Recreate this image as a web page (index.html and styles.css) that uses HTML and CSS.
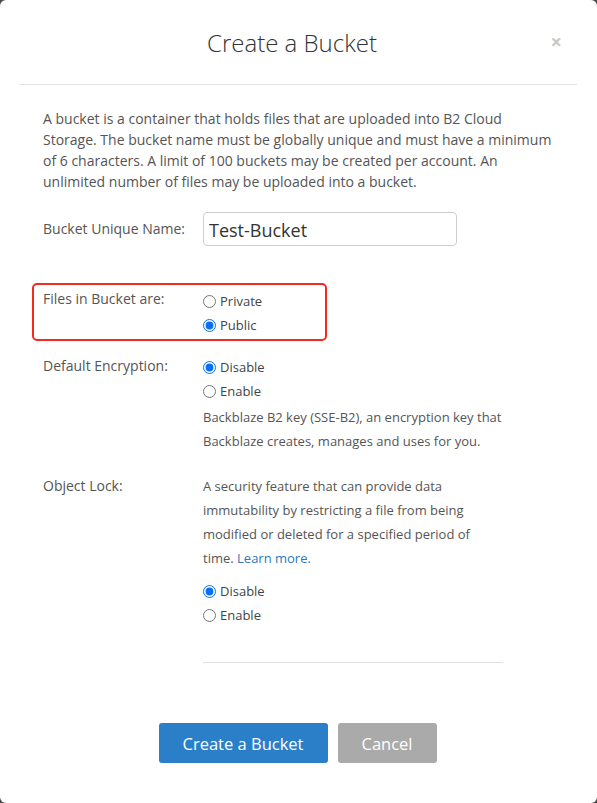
FILE: index.html
```html
<!DOCTYPE html>
<html lang="en">
<head>
<meta charset="utf-8">
<title>Create a Bucket</title>
<link rel="stylesheet" href="styles.css">
</head>
<body>
<div class="modal">
  <div class="modal-header">
    <h2 class="modal-title">Create a Bucket</h2>
    <button class="close" type="button" aria-label="Close">&times;</button>
  </div>
  <div class="modal-body">
    <p class="intro">A bucket is a container that holds files that are uploaded into B2 Cloud Storage. The bucket name must be globally unique and must have a minimum of 6 characters. A limit of 100 buckets may be created per account. An unlimited number of files may be uploaded into a bucket.</p>

    <div class="row row-name">
      <label class="label label-name" for="bucketName">Bucket Unique Name:</label>
      <input class="text-input" id="bucketName" type="text" value="Test-Bucket">
    </div>

    <div class="row row-files highlight">
      <div class="label">Files in Bucket are:</div>
      <div class="options">
        <label class="radio"><input type="radio" name="privacy"> Private</label>
        <label class="radio"><input type="radio" name="privacy" checked> Public</label>
      </div>
    </div>

    <div class="row row-enc">
      <div class="label">Default Encryption:</div>
      <div class="options">
        <label class="radio"><input type="radio" name="enc" checked> Disable</label>
        <label class="radio"><input type="radio" name="enc"> Enable</label>
        <p class="note">Backblaze B2 key (SSE-B2), an encryption key that Backblaze creates, manages and uses for you.</p>
      </div>
    </div>

    <div class="row row-lock">
      <div class="label">Object Lock:</div>
      <div class="options">
        <p class="lock-desc">A security feature that can provide data immutability by restricting a file from being modified or deleted for a specified period of time. <a href="#" class="link">Learn more.</a></p>
        <label class="radio"><input type="radio" name="lock" checked> Disable</label>
        <label class="radio"><input type="radio" name="lock"> Enable</label>
        <div class="divider"></div>
      </div>
    </div>
  </div>
  <div class="modal-footer">
    <button class="btn btn-primary" type="button">Create a Bucket</button>
    <button class="btn btn-cancel" type="button">Cancel</button>
  </div>
</div>
</body>
</html>
```
FILE: styles.css
```css
* { box-sizing: border-box; }
html, body { margin: 0; padding: 0; }
body {
  background: #4a4a4a;
  font-family: "Open Sans", "Liberation Sans", sans-serif;
  color: #555;
  width: 597px;
  height: 803px;
  overflow: hidden;
}
.modal {
  width: 597px;
  height: 803px;
  background: #fff;
  border-radius: 6px;
  display: flex;
  flex-direction: column;
}
.modal-header {
  margin: 0 20px 0 19px;
  height: 85px;
  border-bottom: 1px solid #e3e3e3;
  display: flex;
  align-items: center;
  justify-content: center;
  position: relative;
}
.modal-title {
  margin: 0 12px 0 0;
  font-size: 24px;
  font-weight: 300;
  color: #333;
  line-height: 1;
  padding-top: 2px;
}
.close {
  position: absolute;
  right: 15px;
  top: 32px;
  border: 0;
  background: none;
  padding: 0;
  font-family: "Open Sans", sans-serif;
  font-size: 20px;
  font-weight: 700;
  color: #c8c8c8;
  line-height: 1;
}
.modal-body {
  padding: 23px 43px 0 43px;
}
.intro {
  margin: 0;
  font-size: 14px;
  line-height: 21px;
  color: #555;
}
.row {
  display: grid;
  grid-template-columns: 160px 1fr;
}
.label {
  font-size: 14px;
  line-height: 20px;
  color: #555;
}
.row-name {
  margin-top: 20px;
  align-items: center;
}
.text-input {
  width: 254px;
  height: 34px;
  border: 1px solid #cfcfcf;
  border-radius: 4px;
  padding: 2px 5px 0;
  font-family: "Open Sans", sans-serif;
  font-size: 18px;
  color: #333;
  outline: none;
}
.highlight {
  margin: 37px 0 0 -11px;
  width: 295px;
  height: 58px;
  border: 2px solid #f42a1e;
  border-radius: 5px;
  padding: 4px 0 0 9px;
}
.options {
  display: flex;
  flex-direction: column;
}
.radio {
  display: flex;
  align-items: center;
  font-size: 13px;
  line-height: 24px;
  height: 24px;
  color: #444;
}
.radio input {
  margin: 0 4px 0 0;
  width: 13px;
  height: 13px;
  accent-color: #0a6ff2;
}
.row-enc {
  margin-top: 14px;
}
.row-enc .label { margin-top: 1px; }
.note {
  margin: 2px 0 0;
  font-size: 13px;
  line-height: 24px;
  color: #555;
}
.row-lock {
  margin-top: 21px;
}
.row-lock .label { margin-top: 2px; }
.lock-desc {
  margin: 0 0 9px;
  width: 300px;
  font-size: 13px;
  line-height: 24px;
  color: #555;
}
.link {
  color: #2a78c0;
  text-decoration: none;
}
.divider {
  margin-top: 35px;
  width: 300px;
  border-top: 1px solid #e0e0e0;
}
.modal-footer {
  margin-top: 60px;
  display: flex;
  justify-content: center;
  gap: 10px;
  padding-right: 2px;
}
.btn {
  height: 40px;
  border: 0;
  border-radius: 3px;
  font-family: "Open Sans", sans-serif;
  font-size: 16.5px;
  color: #fff;
  padding: 0;
}
.btn-primary {
  width: 169px;
  background: #2a7fc8;
}
.btn-cancel {
  width: 99px;
  background: #aaaaaa;
}
```
